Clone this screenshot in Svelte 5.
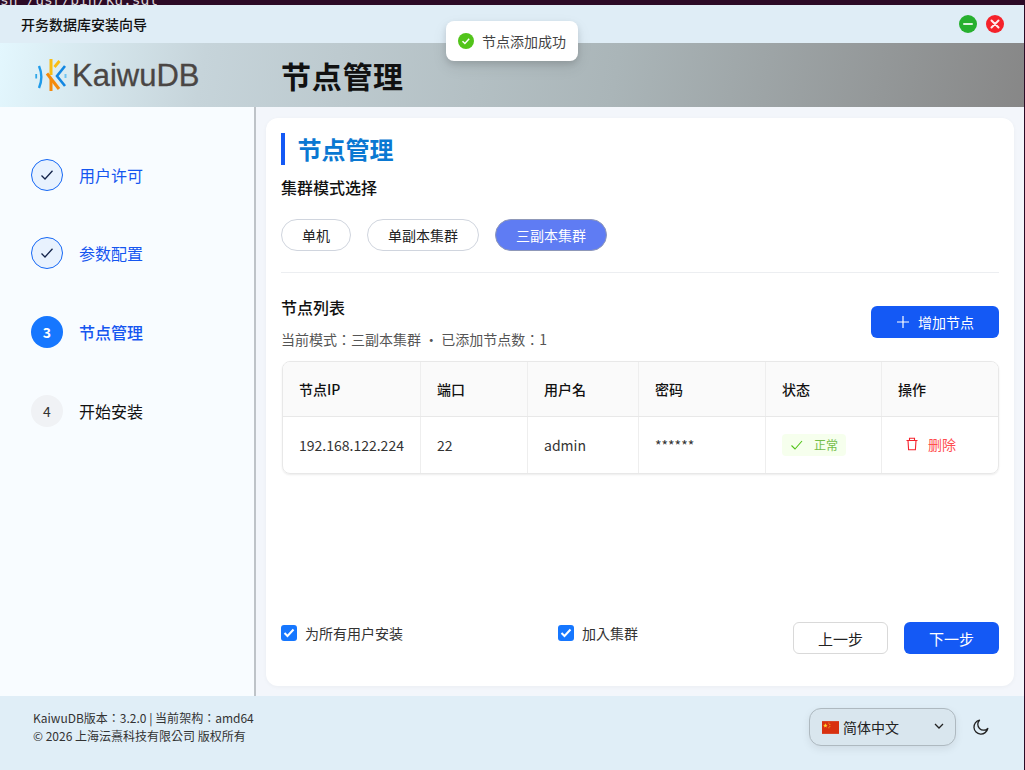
<script lang="ts">
	const steps = [
		{ label: '用户许可', state: 'done' },
		{ label: '参数配置', state: 'done' },
		{ label: '节点管理', state: 'active', num: 3 },
		{ label: '开始安装', state: 'todo', num: 4 }
	];
	const modes = [
		{ label: '单机', width: 70 },
		{ label: '单副本集群', width: 112 },
		{ label: '三副本集群', width: 112, on: true }
	];
</script>

<div class="screen">
	<div class="terminal">sh /usr/bin/ku.sql</div>
	<div class="window">
		<div class="titlebar">
			<span class="app-name">开务数据库安装向导</span>
			<div class="win-btns">
				<button class="win-btn min" aria-label="最小化">
					<svg width="10" height="10" viewBox="0 0 10 10"><path d="M1 5h8" stroke="#dff3df" stroke-width="2" stroke-linecap="round" /></svg>
				</button>
				<button class="win-btn close" aria-label="关闭">
					<svg width="10" height="10" viewBox="0 0 10 10"><path d="M1.500 1.500l7 7M8.500 1.500l-7 7" stroke="#ffecec" stroke-width="2" stroke-linecap="round" /></svg>
				</button>
			</div>
		</div>

		<header class="header">
			<div class="logo">
				<svg width="32" height="34" viewBox="35 57 32 34" fill="none" stroke-width="2.4">
					<path d="M36.200 73v4.500" stroke="#2fa7e8" stroke-width="1.800" />
					<path d="M39 65c3 7 3 15 0 22" stroke="#1f9bea" />
					<path d="M51 58v16" stroke="#f9bd13" stroke-width="3" />
					<path d="M59.500 60l-5 6" stroke="#f9bd13" stroke-width="2.800" />
					<path d="M47 72.500l12 15.500" stroke="#f58a0b" stroke-width="3" />
					<path d="M51 78v12" stroke="#f58a0b" stroke-width="3" />
					<path d="M65 65l-8 10 8 10" stroke="#1287e2" stroke-width="2.600" />
					<path d="M65.500 73v4" stroke="#6cc3f0" stroke-width="2" />
				</svg>
				<span class="logo-text">KaiwuDB</span>
			</div>
			<h1>节点管理</h1>
		</header>

		<div class="body">
			<aside class="sidebar">
				{#each steps as step}
					<div class="step {step.state}">
						<span class="dot">
							{#if step.state === 'done'}
								<svg width="14" height="14" viewBox="0 0 14 14" fill="none"><path d="M1.500 7.500l3.500 3.500L12.500 2.800" stroke="#14244a" stroke-width="1.300" /></svg>
							{:else}
								{step.num}
							{/if}
						</span>
						<span class="step-label">{step.label}</span>
					</div>
				{/each}
			</aside>

			<main class="main">
				<section class="card">
					<h2 class="card-title">节点管理</h2>
					<h3 class="sub first">集群模式选择</h3>
					<div class="modes">
						{#each modes as mode}
							<button class="mode" class:on={mode.on} style="width: {mode.width}px">{mode.label}</button>
						{/each}
					</div>
					<div class="divider"></div>

					<div class="list-head">
						<div>
							<h3 class="sub">节点列表</h3>
							<p class="hint">当前模式：三副本集群 · 已添加节点数：1</p>
						</div>
						<button class="btn primary add">
							<svg width="14" height="14" viewBox="0 0 14 14" fill="none"><path d="M7 1v12M1 7h12" stroke="#fff" stroke-width="1.200" /></svg>
							增加节点
						</button>
					</div>

					<div class="table-wrap">
						<table>
							<colgroup>
								<col style="width: 137px" />
								<col style="width: 107px" />
								<col style="width: 111px" />
								<col style="width: 127px" />
								<col style="width: 116px" />
								<col />
							</colgroup>
							<thead>
								<tr>
									<th>节点IP</th>
									<th>端口</th>
									<th>用户名</th>
									<th>密码</th>
									<th>状态</th>
									<th>操作</th>
								</tr>
							</thead>
							<tbody>
								<tr>
									<td>192.168.122.224</td>
									<td>22</td>
									<td>admin</td>
									<td>******</td>
									<td>
										<span class="tag">
											<svg width="14" height="14" viewBox="0 0 14 14" fill="none"><path d="M1.500 7.500l3.500 3.500 7-8" stroke="#52c41a" stroke-width="1.100" /></svg>
											正常
										</span>
									</td>
									<td>
										<span class="del">
											<svg width="14" height="14" viewBox="0 0 14 14" fill="none" stroke="#f5222d" stroke-width="1.100"><path d="M1.500 3.500h11M4.500 3.500V1.200h5v2.300M3 3.500l.6 9.300h6.800l.6-9.300" /></svg>
											删除
										</span>
									</td>
								</tr>
							</tbody>
						</table>
					</div>

					<div class="card-foot">
						<label class="check all"><span class="box"><svg width="12" height="10" viewBox="0 0 12 10" fill="none"><path d="M1.500 5l3 3 6-6.500" stroke="#fff" stroke-width="2" /></svg></span>为所有用户安装</label>
						<label class="check"><span class="box"><svg width="12" height="10" viewBox="0 0 12 10" fill="none"><path d="M1.500 5l3 3 6-6.500" stroke="#fff" stroke-width="2" /></svg></span>加入集群</label>
						<div class="nav">
							<button class="btn ghost">上一步</button>
							<button class="btn primary">下一步</button>
						</div>
					</div>
				</section>
			</main>
		</div>

		<footer class="footer">
			<div class="version">
				<div>KaiwuDB版本：3.2.0 | 当前架构：amd64</div>
				<div>© 2026 上海沄熹科技有限公司 版权所有</div>
			</div>
			<div class="tools">
				<div class="lang">
					<svg width="17" height="13" viewBox="0 0 16 12"><rect width="16" height="12" fill="#d8300f" /><path d="M3.200 2l.6 1.500 1.500.1-1.200 1 .4 1.500-1.300-.8-1.300.8.4-1.500-1.200-1 1.500-.1z" fill="#ffcf2e" /><circle cx="6.500" cy="1.800" r=".5" fill="#ffcf2e" /><circle cx="7.400" cy="3.200" r=".5" fill="#ffcf2e" /><circle cx="7.400" cy="4.800" r=".5" fill="#ffcf2e" /><circle cx="6.500" cy="6.200" r=".5" fill="#ffcf2e" /></svg>
					<span>简体中文</span>
					<svg class="chev" width="10" height="6" viewBox="0 0 10 6" fill="none"><path d="M1 1l4 4 4-4" stroke="#222" stroke-width="1.300" /></svg>
				</div>
				<svg width="18" height="18" viewBox="0 0 18 18" fill="none"><path d="M7.500 2.200a7 7 0 1 0 8.300 8.300 5.800 5.800 0 0 1-8.300-8.300z" stroke="#222" stroke-width="1.300" stroke-linejoin="round" /></svg>
			</div>
		</footer>

		<div class="toast">
			<svg width="16" height="16" viewBox="0 0 16 16"><circle cx="8" cy="8" r="8" fill="#52c41a" /><path d="M4.500 8.200l2.400 2.300 4.300-4.700" stroke="#fff" stroke-width="1.500" fill="none" /></svg>
			节点添加成功
		</div>
	</div>
</div>

<style>
	:global(body) {
		margin: 0;
		font-family: "Noto Sans CJK TC", "Noto Sans", sans-serif;
		color: #1c1c1c;
	}
	* {
		box-sizing: border-box;
	}
	button {
		font-family: inherit;
		cursor: pointer;
	}
	h1, h2, h3, p {
		margin: 0;
	}
	.screen {
		width: 1025px;
		height: 770px;
		background: #2c0a26;
		overflow: hidden;
	}
	.terminal {
		height: 5px;
		overflow: hidden;
		font: 14.6px/0 "DejaVu Sans Mono", monospace;
		color: #d8d2d6;
	}
	.window {
		position: relative;
		width: 1024px;
		height: 765px;
		display: flex;
		flex-direction: column;
	}
	.titlebar {
		height: 38px;
		flex: none;
		background: #dfedf6;
		display: flex;
		align-items: center;
		justify-content: space-between;
		padding: 0 20px 0 21px;
	}
	.app-name {
		font-size: 14px;
		font-weight: 500;
		color: #111;
	}
	.win-btns {
		display: flex;
		gap: 9px;
	}
	.win-btn {
		width: 18px;
		height: 18px;
		padding: 0;
		border: none;
		border-radius: 50%;
		display: flex;
		align-items: center;
		justify-content: center;
	}
	.win-btn.min {
		background: #27b02f;
	}
	.win-btn.close {
		background: #f5222a;
	}
	.header {
		height: 64px;
		flex: none;
		background: linear-gradient(100deg, #e3f7fe 0%, #c6d4da 20%, #aab5b8 60%, #878787 100%);
		display: flex;
		align-items: center;
	}
	.logo {
		width: 281px;
		padding-left: 35px;
		display: flex;
		align-items: center;
		gap: 5px;
	}
	.logo-text {
		font: 400 31px/1 "Liberation Sans", sans-serif;
		color: #4a4644;
		-webkit-text-stroke: 0.3px #4a4644;
	}
	.header h1 {
		font-size: 30px;
		font-weight: 700;
		color: #111;
		letter-spacing: 0.7px;
	}
	.body {
		flex: 1;
		display: flex;
		min-height: 0;
	}
	.sidebar {
		width: 256px;
		flex: none;
		background: #f8fcff;
		border-right: 2px solid #bec3c8;
		padding: 51.67px 0 0 31px;
		display: flex;
		flex-direction: column;
		gap: 46.67px;
	}
	.step {
		display: flex;
		align-items: center;
		gap: 16px;
		height: 32px;
	}
	.dot {
		width: 32px;
		height: 32px;
		border-radius: 50%;
		display: flex;
		align-items: center;
		justify-content: center;
		font-size: 14px;
	}
	.step-label {
		font-size: 16px;
	}
	.done .dot {
		background: #e8f2fe;
		border: 1px solid #1668f5;
	}
	.done .step-label {
		color: #1556f0;
	}
	.active .dot {
		background: #1677ff;
		color: #fff;
		font-weight: 700;
	}
	.active .step-label {
		color: #1556f0;
		font-weight: 500;
	}
	.todo .dot {
		background: #f0f2f5;
		color: #333;
	}
	.todo .step-label {
		color: #111;
	}
	.main {
		flex: 1;
		background: #f3f6fb;
		padding: 11px 10px 10px;
		display: flex;
	}
	.card {
		flex: 1;
		background: #fff;
		border-radius: 12px;
		box-shadow: 0 1px 4px rgba(0, 0, 0, 0.04);
		padding: 15px 15px 32px;
		display: flex;
		flex-direction: column;
	}
	.card-title {
		height: 32px;
		border-left: 4px solid #1459f5;
		padding-left: 12.500px;
		font-size: 24px;
		line-height: 32px;
		font-weight: 700;
		color: #0a78d2;
	}
	.sub {
		font-size: 16px;
		font-weight: 500;
		line-height: 24px;
		color: #111;
	}
	.sub.first {
		margin-top: 10px;
	}
	.modes {
		display: flex;
		gap: 16px;
		margin-top: 20px;
	}
	.mode {
		height: 32px;
		padding: 0;
		border: 1px solid #d0d5de;
		border-radius: 16px;
		background: #fff;
		font-size: 14px;
		color: #222;
	}
	.mode.on {
		background: #5f7cf3;
		border-color: #8f98b8;
		color: #fff;
	}
	.divider {
		height: 1px;
		background: #eceef1;
		margin-top: 21px;
	}
	.list-head {
		display: flex;
		justify-content: space-between;
		align-items: flex-end;
		margin-top: 22px;
	}
	.hint {
		margin-top: 8px;
		font-size: 14px;
		line-height: 24px;
		color: #555;
	}
	.btn {
		height: 32px;
		width: 95px;
		border-radius: 6px;
		font-size: 15px;
		padding: 0;
	}
	.primary {
		background: #1459f5;
		border: none;
		color: #fff;
	}
	.ghost {
		background: #fff;
		border: 1px solid #d9d9d9;
		color: #222;
	}
	.add {
		width: 128px;
		margin-bottom: 13px;
		font-size: 14px;
		display: flex;
		align-items: center;
		justify-content: center;
		gap: 8px;
	}
	.table-wrap {
		margin-top: 10px;
		margin-left: 1px;
		border: 1px solid #e8e8e8;
		border-radius: 8px;
		overflow: hidden;
		box-shadow: 0 1px 2px rgba(0, 0, 0, 0.08);
	}
	table {
		width: 100%;
		table-layout: fixed;
		border-collapse: collapse;
		font-size: 14px;
	}
	th, td {
		text-align: left;
		padding: 0 16.500px;
		border-left: 1px solid #eeeeee;
	}
	th:first-child, td:first-child {
		padding-left: 16px;
		border-left: none;
	}
	th {
		height: 54px;
		padding-top: 1px;
		background: #fafafa;
		border-bottom: 1px solid #e8e8e8;
		font-weight: 500;
		color: #111;
	}
	td {
		height: 57px;
		color: #333;
	}
	.tag {
		display: inline-flex;
		align-items: center;
		gap: 10px;
		height: 22px;
		padding: 0 8px;
		background: #f6ffed;
		border-radius: 4px;
		font-size: 12px;
		color: #74bd48;
	}
	.del {
		display: inline-flex;
		align-items: center;
		gap: 9px;
		margin-left: 7px;
		color: #ff4d4f;
	}
	.card-foot {
		margin-top: auto;
		display: flex;
		align-items: flex-start;
	}
	.check {
		display: flex;
		align-items: center;
		gap: 8px;
		height: 22px;
		font-size: 14px;
		color: #333;
	}
	.check.all {
		width: 277px;
	}
	.box {
		width: 16px;
		height: 16px;
		border-radius: 3px;
		background: #1677ff;
		display: flex;
		align-items: center;
		justify-content: center;
	}
	.nav {
		margin-left: auto;
		display: flex;
		gap: 16px;
	}
	.footer {
		height: 74px;
		flex: none;
		background: #e0eef7;
		display: flex;
		align-items: center;
		justify-content: space-between;
		padding: 0 34px 12px 33px;
	}
	.version {
		font-size: 12px;
		line-height: 18px;
		color: #333;
	}
	.tools {
		display: flex;
		align-items: center;
		gap: 16px;
	}
	.lang {
		width: 147px;
		height: 38px;
		border: 1px solid #aeb9c0;
		border-radius: 12px;
		background: #d9e6ee;
		box-shadow: 0 3px 8px rgba(0, 0, 0, 0.08);
		display: flex;
		align-items: center;
		gap: 4px;
		padding: 0 11px 0 12px;
		font-size: 14px;
		color: #222;
	}
	.chev {
		margin-left: auto;
		margin-top: -2px;
	}
	.toast {
		position: absolute;
		left: 446px;
		top: 16px;
		width: 132px;
		height: 40px;
		background: #fff;
		border-radius: 8px;
		box-shadow: 0 6px 16px rgba(0, 0, 0, 0.08), 0 3px 6px rgba(0, 0, 0, 0.12);
		display: flex;
		align-items: center;
		gap: 8px;
		padding-left: 12px;
		font-size: 14px;
		color: #444;
	}
</style>
